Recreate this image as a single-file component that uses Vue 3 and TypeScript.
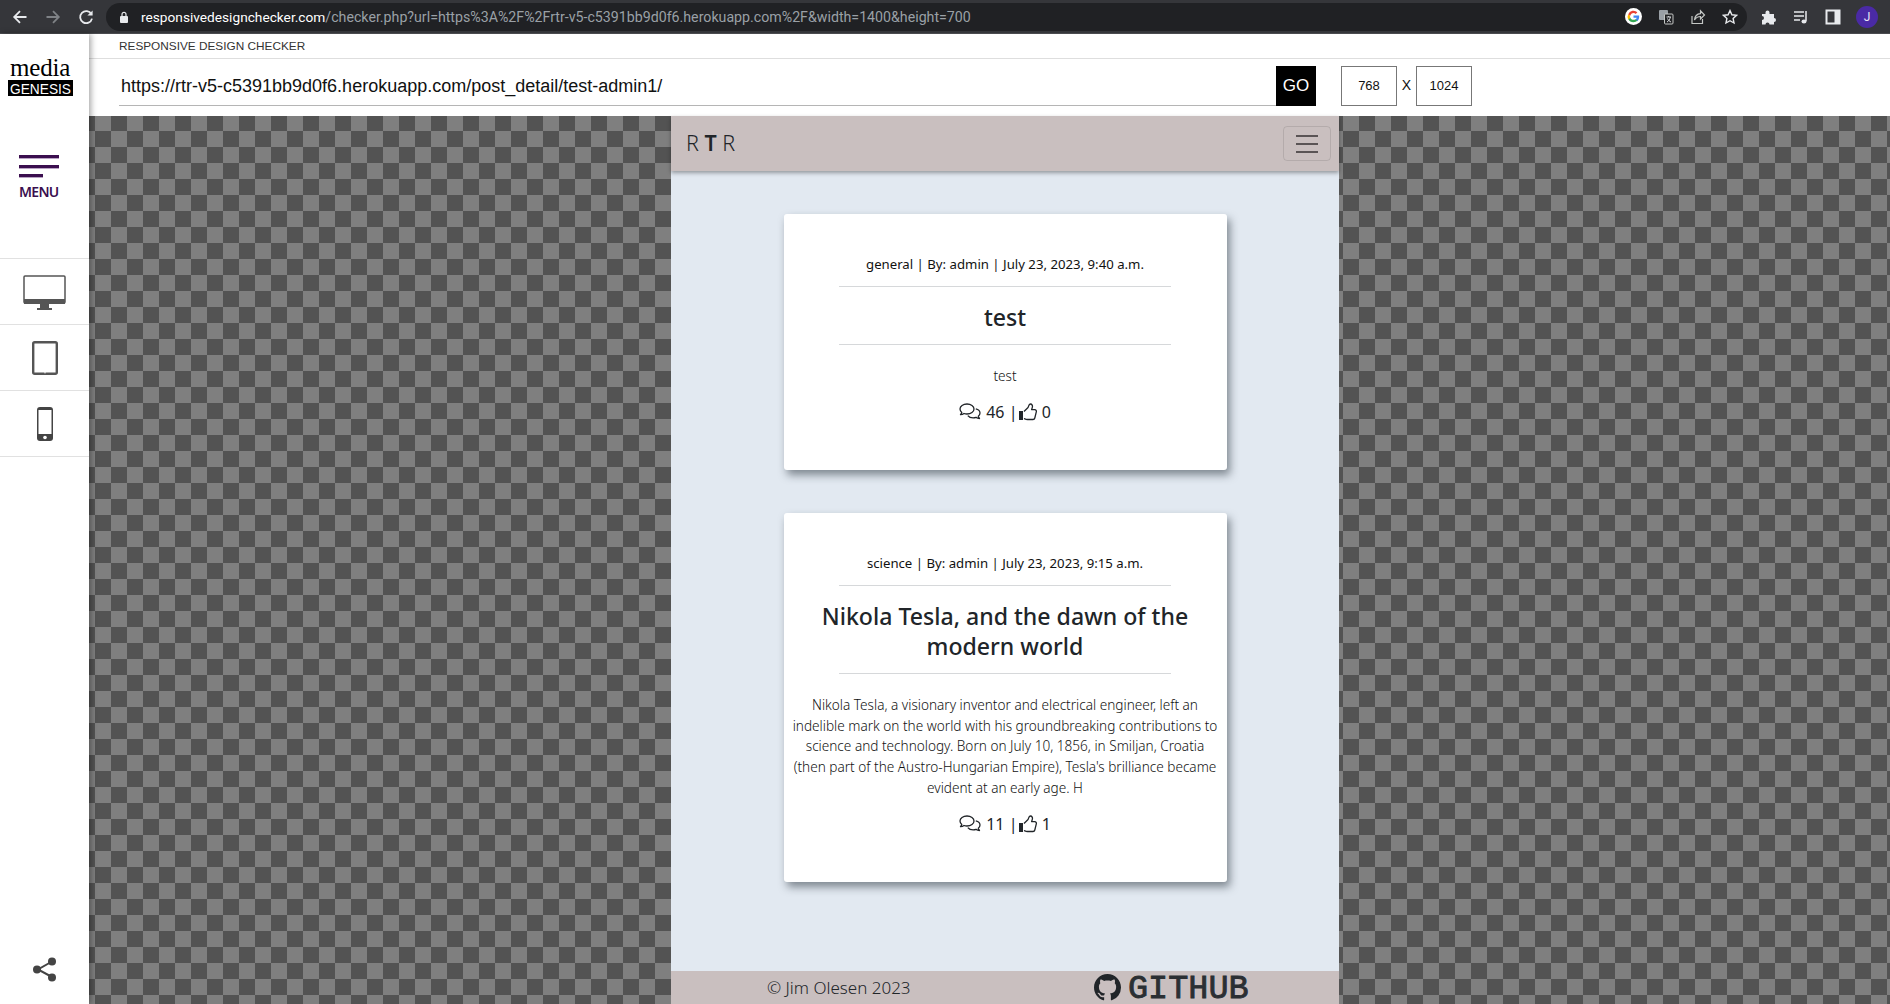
<script setup lang="ts">
interface Post {
  meta: string
  title: string
  body: string
  comments: number
  likes: number
}
const posts: Post[] = [
  { meta: 'general | By: admin | July 23, 2023, 9:40 a.m.', title: 'test', body: 'test', comments: 46, likes: 0 },
  {
    meta: 'science | By: admin | July 23, 2023, 9:15 a.m.',
    title: 'Nikola Tesla, and the dawn of the modern world',
    body: "Nikola Tesla, a visionary inventor and electrical engineer, left an indelible mark on the world with his groundbreaking contributions to science and technology. Born on July 10, 1856, in Smiljan, Croatia (then part of the Austro-Hungarian Empire), Tesla's brilliance became evident at an early age. H",
    comments: 11,
    likes: 1,
  },
]
</script>

<template>
  <div class="screen">
    <div class="browser">
      <div class="nav-icons">
        <svg width="16" height="16" viewBox="0 0 16 16" class="ic"><path d="M14.5 8H2.5M8 2.2 2.2 8 8 13.8" fill="none" stroke="#e8eaed" stroke-width="1.8"/></svg>
        <svg width="16" height="16" viewBox="0 0 16 16" class="ic"><path d="M1.5 8h12M8 2.2 13.8 8 8 13.8" fill="none" stroke="#7f8286" stroke-width="1.8"/></svg>
        <svg width="16" height="16" viewBox="0 0 16 16" class="ic"><path d="M13.4 5.2A6 6 0 1 0 14 9.6" fill="none" stroke="#e8eaed" stroke-width="1.8"/><path d="M14.6 1.4v5.2H9.4z" fill="#e8eaed"/></svg>
      </div>
      <div class="omnibox">
        <svg width="10" height="12" viewBox="0 0 10 12" class="lock"><rect x="1" y="5" width="8" height="7" rx="1" fill="#e8eaed"/><path d="M3 5V3.4a2 2 0 0 1 4 0V5" fill="none" stroke="#e8eaed" stroke-width="1.2"/></svg>
        <span class="addr"><b>responsivedesignchecker.com</b>/checker.php?url=https%3A%2F%2Frtr-v5-c5391bb9d0f6.herokuapp.com%2F&amp;width=1400&amp;height=700</span>
        <div class="omni-actions">
          <svg width="17" height="17" viewBox="0 0 18 18"><circle cx="9" cy="9" r="9" fill="#fff"/><path d="M15 9.2c0-.5 0-.9-.1-1.3H9v2.5h3.4a3 3 0 0 1-1.3 1.9l2 1.6c1.2-1.1 1.9-2.7 1.9-4.7z" fill="#4285f4"/><path d="M9 15c1.7 0 3-.6 4.1-1.5l-2-1.6c-.6.4-1.3.6-2.1.6-1.6 0-3-1.1-3.5-2.5l-2.1 1.6A6.2 6.2 0 0 0 9 15z" fill="#34a853"/><path d="M5.5 10.5a3.600 3.600 0 0 1 0-2.300L3.400 6.600a6 6 0 0 0 0 5.500z" fill="#fbbc05"/><path d="M9 5.400c.9 0 1.700.3 2.300.9l1.800-1.800A6 6 0 0 0 3.400 6.600l2.100 1.600C6 6.700 7.400 5.400 9 5.400z" fill="#ea4335"/></svg>
          <svg width="16" height="16" viewBox="0 0 16 16"><rect x="1" y="1" width="9" height="10" rx="1" fill="#9aa0a6"/><rect x="6.500" y="5" width="8.500" height="10" rx="1" fill="#202124" stroke="#c4c7c5"/><path d="M8.500 8h4.500M10.700 7v1M9 13c2-1 3-3 3.300-5M9.500 9.500c.6 1.400 1.800 2.800 3.500 3.500" fill="none" stroke="#e8eaed" stroke-width=".9"/></svg>
          <svg width="16" height="16" viewBox="0 0 16 16"><path d="M2 7v7.500h10.500V10" fill="none" stroke="#c4c7c5" stroke-width="1.200"/><path d="M4.500 11c.3-3.500 2.500-6 6-6.300V1.800l4 4.200-4 4V7.500c-2.500 0-4.500 1.200-6 3.500z" fill="none" stroke="#c4c7c5" stroke-width="1.200"/></svg>
          <svg width="16" height="16" viewBox="0 0 16 16"><path d="m8 1.600 1.900 4.200 4.600.5-3.400 3.100.9 4.600L8 11.700l-4 2.300.9-4.600L1.500 6.300l4.600-.5z" fill="none" stroke="#e8eaed" stroke-width="1.400"/></svg>
        </div>
      </div>
      <div class="tool-icons">
        <svg width="16" height="16" viewBox="0 0 16 16"><path d="M1 5h3.500V3.500a2 2 0 0 1 4 0V5H13v4a2 2 0 0 1 0 4v2.500H8.500a2 2 0 0 0-4 0H1V11a2 2 0 0 0 0-4z" fill="#e8eaed"/></svg>
        <svg width="16" height="16" viewBox="0 0 16 16"><path d="M1 3h10M1 7h10M1 11h6" stroke="#e8eaed" stroke-width="1.500"/><path d="M13 2v10" stroke="#e8eaed" stroke-width="1.500"/><ellipse cx="11" cy="12.500" rx="2.500" ry="2" fill="#e8eaed"/></svg>
        <svg width="16" height="16" viewBox="0 0 16 16"><rect x="1.500" y="1.500" width="13" height="13" fill="none" stroke="#e8eaed" stroke-width="2"/><rect x="9.500" y="1.500" width="5" height="13" fill="#e8eaed"/></svg>
        <span class="avatar">J</span>
      </div>
    </div>

    <div class="app">
      <aside class="side">
        <div class="logo">
          <span class="logo-media">media</span>
          <svg class="logo-box" width="65" height="16" viewBox="0 0 65 16"><rect width="65" height="16" fill="#000"/><text x="2" y="13.500" fill="#fff" font-size="15.500" font-family="Liberation Sans, sans-serif" textLength="61" lengthAdjust="spacingAndGlyphs">GENESIS</text></svg>
        </div>
        <div class="menu">
          <span class="bar"></span>
          <span class="bar"></span>
          <span class="bar short"></span>
          <span class="menu-label">MENU</span>
        </div>
        <div class="devices">
          <div class="device">
            <svg class="shift" width="43" height="36" viewBox="0 0 43 36"><rect x="1" y="1" width="41" height="27" rx="1" fill="#fff" stroke="#555" stroke-width="1.500"/><rect x="1" y="24" width="41" height="5" fill="#555"/><path d="M17 29h9v4h3v2H14v-2h3z" fill="#555"/></svg>
          </div>
          <div class="device">
            <svg width="26" height="34" viewBox="0 0 26 34"><rect x="1.200" y="1.200" width="23.600" height="31.600" rx="1.500" fill="#fff" stroke="#555" stroke-width="2.400"/><circle cx="13" cy="31.700" r=".7" fill="#fff"/></svg>
          </div>
          <div class="device">
            <svg width="18" height="36" viewBox="0 0 18 36"><rect x="1" y="1" width="16" height="34" rx="3" fill="#444"/><rect x="2.500" y="4" width="13" height="24" fill="#fff"/><circle cx="9" cy="31.500" r="1.800" fill="#fff"/></svg>
          </div>
        </div>
        <div class="share">
          <svg width="26" height="26" viewBox="0 0 26 26"><path d="M20 5.500 6 13.500 20 21" fill="none" stroke="#444" stroke-width="2"/><circle cx="20" cy="5.500" r="4" fill="#444"/><circle cx="5" cy="13.500" r="4" fill="#444"/><circle cx="20" cy="21.500" r="4" fill="#444"/></svg>
        </div>
      </aside>

      <div class="work">
        <header class="head">
          <div class="head-title">RESPONSIVE DESIGN CHECKER</div>
          <div class="head-row">
            <div class="url">https://rtr-v5-c5391bb9d0f6.herokuapp.com/post_detail/test-admin1/</div>
            <div class="go">GO</div>
            <div class="dim first">768</div>
            <span class="times">X</span>
            <div class="dim">1024</div>
          </div>
        </header>

        <div class="stage">
          <div class="viewport">
            <nav class="topnav">
              <span class="brand">R <strong>T</strong> R</span>
              <span class="toggler">
                <i></i><i></i><i></i>
              </span>
            </nav>
            <main class="content">
              <article v-for="p in posts" :key="p.title" class="card">
                <p class="meta">{{ p.meta }}</p>
                <hr />
                <h2 class="title">{{ p.title }}</h2>
                <hr class="lower" />
                <p class="body">{{ p.body }}</p>
                <p class="stats">
                  <svg class="cmt" width="23" height="18" viewBox="0 0 23 18"><path d="M8 1C4 1 1 3.200 1 6c0 1.300.7 2.500 1.800 3.400-.3 1-.9 1.800-1.300 2.300 1.400-.1 2.700-.6 3.500-1.200.9.3 1.900.5 3 .5 4 0 7-2.200 7-5S12 1 8 1z" fill="none" stroke="#212529" stroke-width="1.300" stroke-linejoin="round"/><path d="M16.800 5.800c2.500.6 4.200 2.200 4.200 4.200 0 1.300-.7 2.400-1.700 3.200.2.900.7 1.700 1.200 2.300-1.300-.1-2.500-.5-3.400-1.100-.9.300-1.900.5-3 .5-2.200 0-4.200-.9-5.300-2.300" fill="none" stroke="#212529" stroke-width="1.300" stroke-linejoin="round"/></svg>
                  <span>{{ p.comments }} | </span>
                  <svg class="thumb" width="18" height="18" viewBox="0 0 18 18"><rect x="0" y="8" width="4" height="9" fill="#212529"/><path d="M5 8.500 8.800 4.800C9.800 3.800 9.500 1 11.300 1c1.800 0 2.500 1.800 2 3.400l-.7 2.300h3.100c1.300 0 1.900 1.100 1.600 2.100l-1.500 6.200c-.2.900-.9 1.500-1.800 1.500H8.500c-1.200 0-2.300-.5-3.500-1" fill="none" stroke="#212529" stroke-width="1.300" stroke-linejoin="round"/></svg>
                  <span>{{ p.likes }}</span>
                </p>
              </article>
            </main>
            <footer class="foot">
              <span class="copy">© Jim Olesen 2023</span>
              <span class="gh">
                <svg width="27" height="27" viewBox="0 0 16 16"><path fill="#212529" d="M8 0C3.580 0 0 3.580 0 8c0 3.540 2.290 6.530 5.470 7.590.4.070.55-.17.55-.38 0-.19-.01-.82-.01-1.490-2.010.37-2.530-.49-2.690-.94-.09-.23-.48-.94-.82-1.130-.28-.15-.68-.52-.01-.53.630-.01 1.080.58 1.230.82.720 1.210 1.870.87 2.330.66.070-.52.280-.87.510-1.070-1.780-.2-3.640-.89-3.640-3.950 0-.87.310-1.590.820-2.150-.08-.2-.36-1.020.08-2.120 0 0 .67-.21 2.200.82.640-.18 1.320-.27 2-.27s1.360.09 2 .27c1.530-1.040 2.200-.82 2.200-.82.44 1.100.16 1.920.08 2.120.51.560.82 1.270.82 2.150 0 3.070-1.870 3.750-3.650 3.950.29.250.54.730.54 1.480 0 1.070-.01 1.930-.01 2.200 0 .21.150.46.550.38A8.010 8.010 0 0 0 16 8c0-4.420-3.580-8-8-8z"/></svg>
                <span class="gh-word">GITHUB</span>
              </span>
            </footer>
          </div>
        </div>
      </div>
    </div>
  </div>
</template>

<style>
html, body { margin: 0; padding: 0; overflow: hidden; background: #fff; }
</style>

<style scoped>
.screen {
  width: 1890px;
  height: 1004px;
  display: flex;
  flex-direction: column;
  overflow: hidden;
  font-family: "Noto Sans", sans-serif;
  color: #212529;
}
.browser {
  height: 34px;
  flex: none;
  background: #35363a;
  display: flex;
  align-items: center;
  box-sizing: border-box;
  border-bottom: 1px solid #4a4b4f;
}
.nav-icons {
  width: 106px;
  padding-left: 12px;
  box-sizing: border-box;
  display: flex;
  gap: 17px;
  flex: none;
}
.omnibox {
  width: 1641px;
  height: 28px;
  background: #202124;
  border-radius: 14px;
  display: flex;
  align-items: center;
  flex: none;
  box-sizing: border-box;
  padding-left: 13px;
}
.lock { flex: none; }
.addr {
  margin-left: 12px;
  font: 14.2px Roboto, sans-serif;
  color: #9aa0a6;
  white-space: nowrap;
}
.addr b { font-weight: 400; font-size: 13.7px; color: #fff; }
.omni-actions {
  margin-left: auto;
  margin-right: 9px;
  display: flex;
  align-items: center;
  gap: 16px;
}
.omni-actions svg { display: block; }
.tool-icons {
  display: flex;
  align-items: center;
  gap: 16px;
  padding-left: 14px;
}
.tool-icons svg { display: block; }
.avatar {
  width: 22px;
  height: 22px;
  margin-left: -1px;
  border-radius: 50%;
  background: #4a2aa5;
  color: #e8e4f6;
  font: 12px Roboto, sans-serif;
  display: flex;
  align-items: center;
  justify-content: center;
}

.app { flex: 1; display: flex; min-height: 0; }
.side {
  width: 89px;
  flex: none;
  background: #fff;
  position: relative;
  z-index: 2;
  box-shadow: 2px 0 6px rgba(0, 0, 0, 0.35);
  display: flex;
  flex-direction: column;
}
.logo {
  display: flex;
  flex-direction: column;
  align-items: flex-start;
  padding: 22px 0 0 8px;
  height: 61px;
}
.logo-media {
  font: 25px/24px "Liberation Serif", serif;
  color: #000;
  letter-spacing: -0.2px;
  margin-left: 2px;
}
.logo-box { display: block; overflow: visible; }
.menu {
  margin-top: 38px;
  margin-left: 19px;
  display: flex;
  flex-direction: column;
  height: 103px;
}
.bar {
  width: 40px;
  height: 3px;
  background: #3b0f4f;
  margin-bottom: 6.500px;
  box-shadow: 0 1px 0 #b9a3c4;
}
.bar.short { width: 24px; margin-bottom: 0; }
.menu-label {
  margin-top: 5px;
  font-size: 14px;
  line-height: 20px;
  font-weight: 600;
  color: #3b0f4f;
  letter-spacing: -0.7px;
}
.devices { border-top: 1px solid #e1e1e1; }
.device {
  height: 65px;
  border-bottom: 1px solid #e1e1e1;
  display: flex;
  align-items: center;
  justify-content: center;
}
.shift { margin-top: 2px; }
.share {
  margin-top: auto;
  margin-bottom: 22px;
  display: flex;
  justify-content: center;
}

.work { flex: 1; display: flex; flex-direction: column; min-width: 0; }
.head { height: 82px; flex: none; background: #fff; box-sizing: border-box; }
.head-title {
  height: 25px;
  border-bottom: 1px solid #dedede;
  box-sizing: border-box;
  padding-left: 30px;
  font: 11.800px/24px "Liberation Sans", sans-serif;
  color: #333;
}
.head-row {
  display: flex;
  align-items: flex-start;
  padding: 7px 0 0 30px;
}
.url {
  width: 1157px;
  height: 40px;
  box-sizing: border-box;
  border-bottom: 1px solid #b5b5b5;
  padding-left: 2px;
  font: 18px/40px "Liberation Sans", sans-serif;
  color: #111;
}
.go {
  width: 40px;
  height: 40px;
  background: #000;
  color: #fff;
  font: 17px/40px "Liberation Sans", sans-serif;
  text-align: center;
}
.dim {
  width: 56px;
  height: 40px;
  box-sizing: border-box;
  border: 1px solid #777;
  font: 13px/38px "Liberation Sans", sans-serif;
  color: #111;
  text-align: center;
}
.dim.first { margin-left: 25px; }
.times {
  width: 19px;
  text-align: center;
  font: 14px/38px "Liberation Sans", sans-serif;
  color: #111;
}

.stage {
  flex: 1;
  min-height: 0;
  padding-left: 582px;
  background-color: #7f7f7f;
  background-image: conic-gradient(#535353 25%, #7f7f7f 0 50%, #535353 0 75%, #7f7f7f 0);
  background-size: 32px 32px;
  background-position: -10px 15px;
}
.viewport {
  width: 668px;
  height: 100%;
  background: #e2e9f1;
  display: flex;
  flex-direction: column;
}
.topnav {
  height: 55px;
  flex: none;
  box-sizing: border-box;
  background: #c9bfbf;
  box-shadow: 0 2px 4px rgba(0, 0, 0, 0.35);
  display: flex;
  align-items: center;
  justify-content: space-between;
  padding: 0 8px 0 15px;
  position: relative;
}
.brand {
  font-size: 21.500px;
  line-height: 26px;
  margin-bottom: 2px;
  font-weight: 300;
  color: #212529;
}
.brand strong { font-weight: 600; }
.toggler {
  width: 48px;
  height: 35px;
  box-sizing: border-box;
  border: 1px solid rgba(0, 0, 0, 0.1);
  border-radius: 4px;
  display: flex;
  flex-direction: column;
  align-items: center;
  justify-content: center;
  gap: 6px;
}
.toggler i { display: block; width: 22px; height: 2px; background: #5a5455; }
.content {
  flex: 1;
  padding-top: 43px;
  display: flex;
  flex-direction: column;
  align-items: center;
  gap: 43px;
}
.card {
  width: 443px;
  box-sizing: border-box;
  padding: 40px 8px 46px;
  background: #fff;
  border-radius: 3px;
  box-shadow: 3px 5px 8px rgba(30, 40, 50, 0.5);
  text-align: center;
}
.meta {
  margin: 0;
  font-size: 13.200px;
  line-height: 20px;
  font-weight: 400;
  color: #111;
}
hr {
  width: 332px;
  height: 1px;
  margin: 12px auto 0;
  border: 0;
  background: #d6d8da;
}
.title {
  margin: 15px 0 0;
  font-size: 23.100px;
  line-height: 30px;
  font-weight: 500;
}
hr.lower { margin-top: 12px; }
.body {
  margin: 21px 0 0;
  font-size: 13.600px;
  line-height: 20.800px;
  font-weight: 300;
  color: #111;
}
.stats {
  margin: 13px 0 0;
  font-size: 16px;
  line-height: 24px;
  display: flex;
  align-items: center;
  justify-content: center;
  white-space: pre;
}
.cmt { margin-right: 4px; }
.thumb { margin-right: 5px; margin-left: -3px; }
.foot {
  height: 33px;
  flex: none;
  background: #c9bfbf;
  display: flex;
  align-items: center;
  padding-left: 96px;
}
.copy { font-size: 17px; font-weight: 300; width: 327px; white-space: nowrap; }
.gh { display: flex; align-items: center; gap: 7px; }
.gh svg { display: block; }
.gh-word {
  font: 400 33.500px/30px "Liberation Mono", monospace;
  padding-top: 3px;
  -webkit-text-stroke: 0.9px #2b2f33;
  color: #2b2f33;
}
</style>
